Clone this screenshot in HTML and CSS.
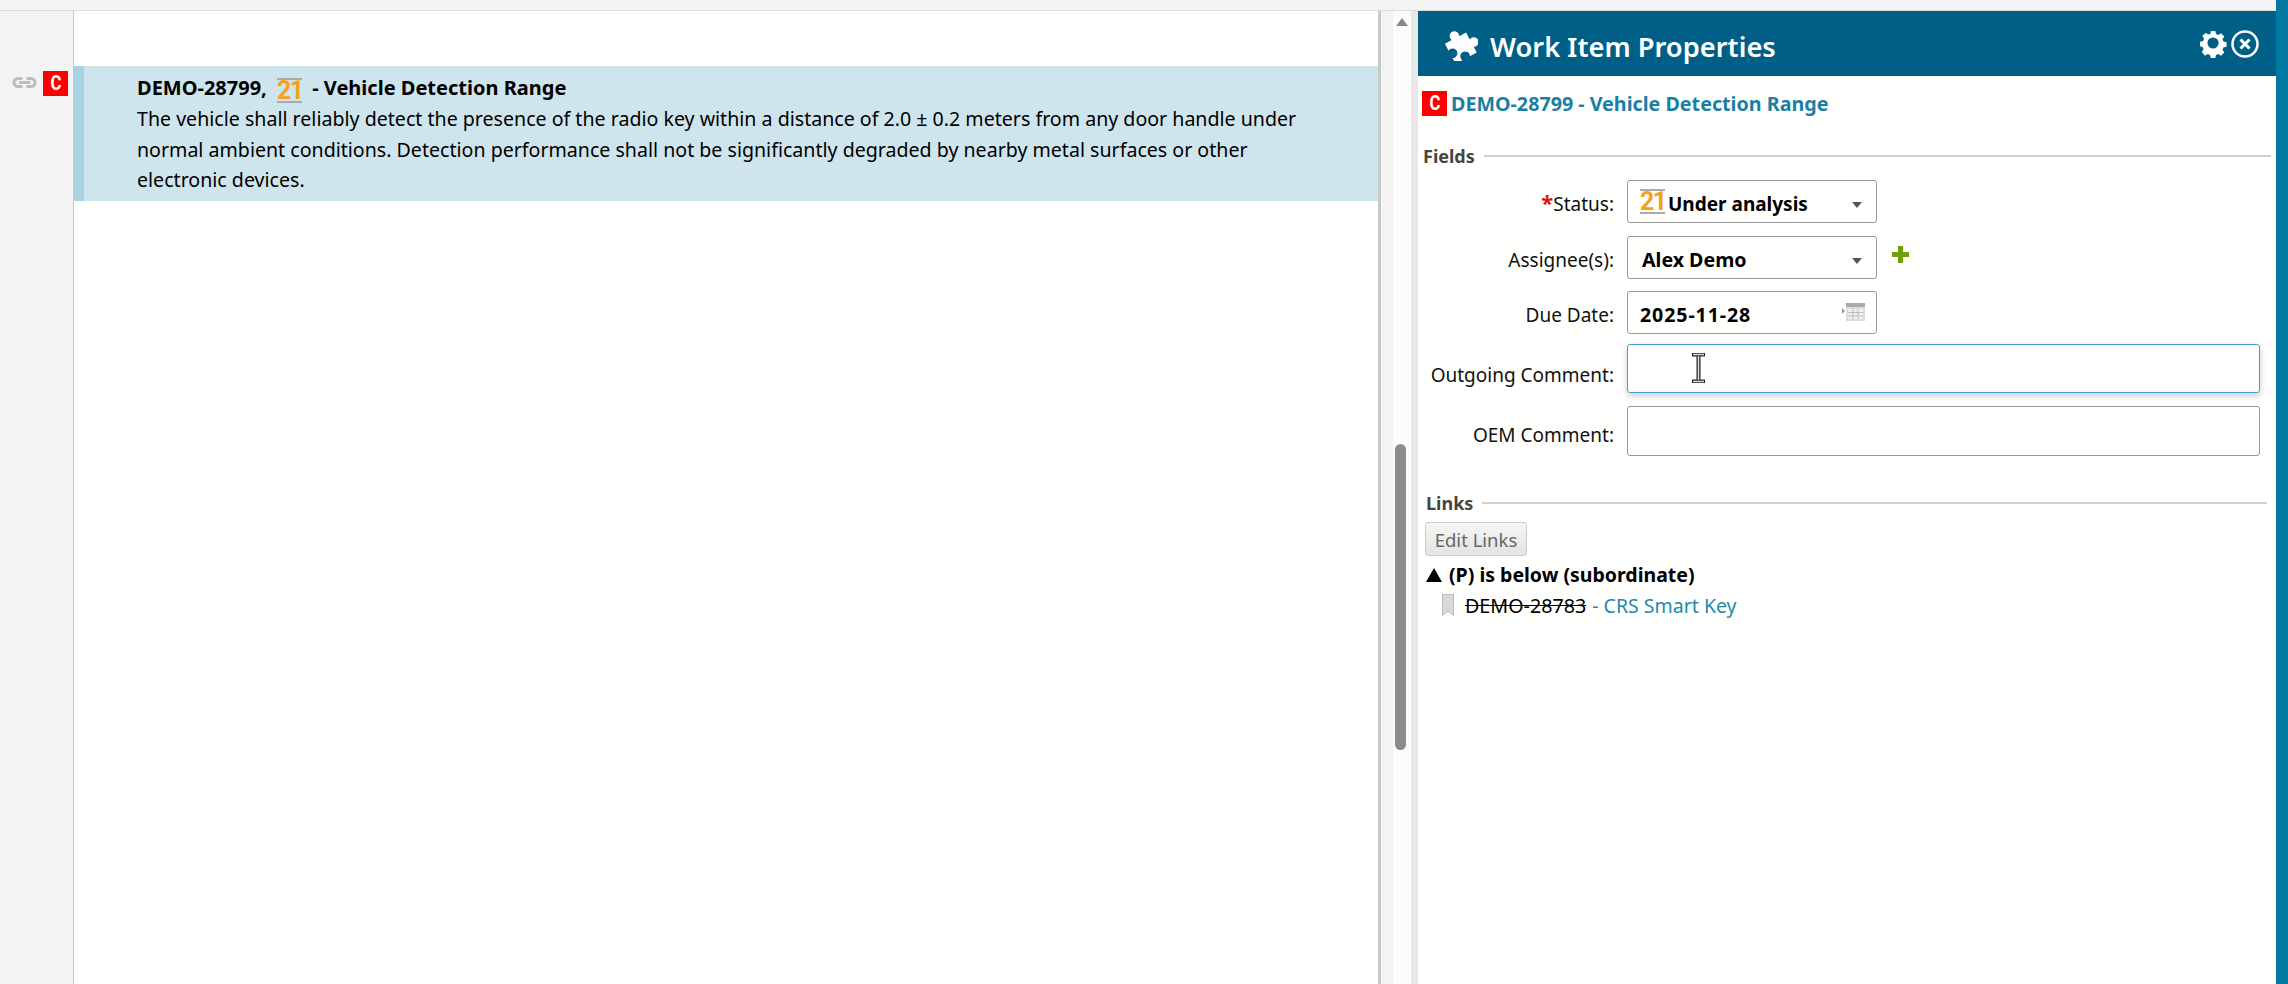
FILE: index.html
```html
<!DOCTYPE html>
<html lang="en">
<head>
<meta charset="utf-8">
<title>Work Item Properties</title>
<link rel="stylesheet" href="styles.css">
</head>
<body>
<div class="topstrip"></div>
<div class="main">
  <div class="gutter">
    <svg class="chain" width="25" height="11" viewBox="0 0 25 11"><g fill="none" stroke="#bdbdbd" stroke-width="3"><path d="M10.500 1.500H6a4 4 0 0 0 0 8h4.500"/><path d="M14.500 1.500H19a4 4 0 0 1 0 8h-4.500"/><path d="M7 5.500h11"/></g></svg>
    <span class="badge"><span class="badge-c">C</span></span>
  </div>
  <div class="doc">
    <div class="row">
      <div class="row-title">DEMO-28799, <span class="st21 st21-small">21</span> - Vehicle Detection Range</div>
      <p class="row-text">The vehicle shall reliably detect the presence of the radio key within a distance of 2.0 ± 0.2 meters from any door handle under normal ambient conditions. Detection performance shall not be significantly degraded by nearby metal surfaces or other electronic devices.</p>
    </div>
  </div>
  <div class="sash"></div>
  <div class="scroll">
    <svg class="scroll-up" width="14" height="10" viewBox="0 0 14 10"><path d="M7 1l6 8H1z" fill="#8a8a8a"/></svg>
    <div class="thumb"></div>
  </div>
  <div class="panel">
    <header class="phead">
      <svg class="puzzle" width="36" height="30" viewBox="3 2 30 25"><g transform="rotate(-28 18 15)"><path fill="#fff" d="M8 7h6.500a4 4 0 1 1 7 0H28v6.500a4 4 0 1 1 0 7V26h-6.500a4 4 0 1 0-7 0H8v-5.500a4 4 0 1 0 0-7z"/></g></svg>
      <h1 class="ptitle">Work Item Properties</h1>
      <div class="pactions">
        <svg width="28" height="28" viewBox="0 0 28 28"><path fill="#fff" fill-rule="evenodd" d="M11.500 1h5l.7 3.400 2.500 1 2.900-1.900 3.500 3.500-1.900 2.900 1 2.500 3.400.7v5l-3.400.7-1 2.500 1.900 2.900-3.500 3.500-2.900-1.900-2.500 1-.7 3.400h-5l-.7-3.400-2.500-1-2.900 1.900L1.900 23.700l1.900-2.900-1-2.500L0 17.500v-5l3.400-.7 1-2.500L2.500 6.500 6 3l2.900 1.900 2.500-1zM14 8a6 6 0 1 0 0 12 6 6 0 0 0 0-12z" transform="translate(1 0) scale(.93)"/></svg>
        <svg width="28" height="28" viewBox="0 0 28 28"><circle cx="14" cy="14" r="12.500" fill="none" stroke="#fff" stroke-width="2.500"/><path d="M9.500 9.500l9 9M18.500 9.500l-9 9" stroke="#fff" stroke-width="3" fill="none"/></svg>
      </div>
    </header>
    <div class="pbody">
      <div class="item-link"><span class="badge"><span class="badge-c">C</span></span><a class="item-name">DEMO-28799 - Vehicle Detection Range</a></div>
      <div class="legend legend-fields"><span>Fields</span></div>
      <div class="form">
        <label class="lbl lbl-s"><span class="req">*</span>Status:</label>
        <div class="field field-sm select"><span class="st21">21</span><b>Under analysis</b><i class="caret"></i></div>
        <label class="lbl lbl-a">Assignee(s):</label>
        <div class="assignee">
          <div class="field field-sm select"><b class="pad">Alex Demo</b><i class="caret"></i></div>
          <svg class="plus" width="17" height="17" viewBox="0 0 17 17"><path fill="#6f9f10" d="M6 0h5v6h6v5h-6v6H6v-6H0V6h6z"/></svg>
        </div>
        <label class="lbl">Due Date:</label>
        <div class="field field-sm select"><b class="date">2025-11-28</b>
          <svg class="cal" width="24" height="20" viewBox="0 0 24 20"><path d="M0 6l3 3-3 3z" fill="#999"/><path d="M4 1h19v18H4z" fill="#dcdcdc"/><path d="M4 1h19v4H4z" fill="#aaa"/><path d="M6 7h15v10H6z" fill="#f1f1f1"/><path d="M6 10.500h15M6 14h15M11 7v10M16 7v10" stroke="#bbb" fill="none"/></svg>
        </div>
        <label class="lbl lbl-o">Outgoing Comment:</label>
        <div class="field field-lg focus"></div>
        <label class="lbl lbl-e">OEM Comment:</label>
        <div class="field field-lg field-oem"></div>
      </div>
      <div class="legend legend-links"><span>Links</span></div>
      <button class="btn" type="button">Edit Links</button>
      <div class="rel"><span class="tri"></span>(P) is below (subordinate)</div>
      <div class="rel-item">
        <svg class="mark" width="12" height="22" viewBox="0 0 12 22"><path d="M.5.500h11v21L6 17 .5 21.500z" fill="#d9d9d9" stroke="#bbb"/></svg>
        <s>DEMO-28783</s><a class="rel-link"> - CRS Smart Key</a>
      </div>
    </div>
    <svg class="ibeam" width="15" height="30" viewBox="0 0 15 30"><path d="M1 1.500h13M1 28.500h13M7.500 2v26" fill="none" stroke="#222" stroke-width="4"/><path d="M2 1.500h11M2 28.500h11M7.500 3v24" fill="none" stroke="#ddd" stroke-width="1.500"/></svg>
  </div>
  <div class="edge"></div>
</div>
</body>
</html>
```
FILE: styles.css
```css
* { box-sizing: border-box; }
html, body { height: 100%; margin: 0; }
body {
  display: flex;
  flex-direction: column;
  background: #fffffd;
  font-family: "Noto Sans", "Open Sans", sans-serif;
  font-size: 19px;
  color: #000;
  overflow: hidden;
}
.topstrip { height: 11px; flex: none; background: #f4f4f4; border-bottom: 1px solid #dcdcdc; }
.main { flex: 1; display: flex; min-height: 0; }
.gutter {
  width: 74px; flex: none;
  background: #f3f3f3;
  border-right: 1px solid #c9c9c9;
  display: flex;
  align-items: flex-start;
  justify-content: flex-end;
  gap: 6px;
  padding: 60px 5px 0 0;
}
.chain { margin-top: 6px; }
.badge {
  display: inline-flex;
  align-items: center;
  justify-content: center;
  width: 25px; height: 25px;
  flex: none;
  background: #f00;
  color: #fff;
  font-family: "Roboto", sans-serif;
  font-weight: 700;
  font-size: 21px;
  line-height: 1;
}
.badge-c { display: inline-block; transform: scaleX(.8); }
.doc { width: 1304px; flex: none; background: #fffffd; padding-top: 55px; }
.row {
  height: 135px;
  background: #cfe5ed;
  border-left: 10px solid #a9d3e2;
  padding: 6px 58px 0 53px;
  font-size: 19.600px;
}
.row-title { font-weight: 700; font-size: 20px; line-height: 31px; height: 32px; }
.row-text { margin: 0; line-height: 30.500px; }
.st21 {
  display: inline-block;
  font-family: "Roboto", sans-serif;
  font-weight: 700;
  color: #f7a11a;
  border-top: 2px solid #aaa;
  border-bottom: 2px solid #aaa;
  font-size: 25px;
  line-height: 22px;
  height: 25px;
  width: 25px;
  letter-spacing: -1.500px;
  text-align: center;
  flex: none;
}
.st21-small { vertical-align: -4px; margin: 0 5px 0 5px; }
.sash { width: 3px; flex: none; background: #c8c8c8; }
.scroll {
  width: 37px; flex: none;
  background: linear-gradient(to right, #f3f3f3 12px, #fcfcfc 12px, #fcfcfc 30px, #e8e8e8 30px);
  padding: 6px 0 0 14px;
  display: flex;
  flex-direction: column;
}
.scroll-up { flex: none; }
.thumb { width: 11px; height: 306px; margin-top: 417px; background: #8c8c8c; border-radius: 6px; }
.panel { flex: 1; position: relative; min-width: 0; }
.edge { width: 12px; flex: none; background: #0078a0; margin-top: -11px; }
.phead {
  height: 65px;
  background: #005f87;
  display: flex;
  align-items: center;
  padding: 4px 17px 0 24px;
  color: #fff;
}
.puzzle { margin-right: 12px; }
.ptitle { margin: 0; font-size: 27.300px; font-weight: 600; flex: 1; padding-top: 2px; }
.pactions { display: flex; gap: 4px; margin-top: -4px; }
.pbody { padding: 14px 0 0 0; }
.item-link { display: flex; align-items: center; padding-left: 4px; height: 26px; gap: 4px; }
.item-name { font-weight: 700; color: #1a7fa5; font-size: 19.700px; }
.legend {
  display: flex;
  align-items: center;
  gap: 9px;
  font-weight: 700;
  color: #444;
  font-size: 18px;
}
.legend::after { content: ""; flex: 1; height: 2px; background: #d0d0d0; }
.legend-fields { margin: 27px 5px 0 5px; height: 26px; }
.form {
  display: grid;
  grid-template-columns: 196px 633px;
  column-gap: 13px;
  row-gap: 12px;
  margin-top: 11px;
  align-items: center;
}
.lbl { text-align: right; font-size: 19px; color: #111; padding-top: 4px; }
.lbl-a, .assignee { margin-top: 1px; }
.lbl-o, .focus { margin-top: -2px; }
.lbl-o { padding-top: 12px; }
.lbl-e { padding-top: 9px; }
.req { color: #e01010; font-weight: 700; font-size: 22px; line-height: 0; }
.field {
  border: 1px solid #999;
  border-radius: 3px;
  background: #fffffd;
  display: flex;
  align-items: center;
}
.field-sm { width: 250px; height: 43px; padding: 4px 12px 0; font-size: 19px; }
.field-lg { height: 49px; }
.field-oem { height: 50px; margin-top: 1px; }
.focus { border: 1px solid #45a0cc; box-shadow: 0 3px 6px rgba(0,0,0,.2); }
.select { position: relative; }
.select b { font-weight: 700; }
.select .st21 { margin-right: 3px; margin-top: -4px; }
.pad { padding-left: 2px; font-size: 19.600px; }
.select .date { font-size: 19.600px; letter-spacing: .9px; }
.caret {
  position: absolute;
  right: 14px; top: 21px;
  border-left: 5px solid transparent;
  border-right: 5px solid transparent;
  border-top: 6px solid #555;
}
.cal { position: absolute; right: 10px; top: 10px; }
.assignee { display: flex; align-items: center; gap: 15px; }
.plus { margin-top: -6px; }
.legend-links { margin: 34px 9px 0 8px; height: 26px; }
.btn {
  display: block;
  margin: 6px 0 0 7px;
  width: 102px; height: 34px;
  border: 1px solid #ccc;
  border-radius: 3px;
  background: linear-gradient(#f6f6f6, #e3e3e3);
  color: #666;
  font-family: inherit;
  font-size: 18.500px;
  padding: 0;
}
.rel { margin: 4px 0 0 8px; font-weight: 700; font-size: 19.500px; height: 30px; line-height: 30px; }
.tri {
  display: inline-block;
  border-left: 8px solid transparent;
  border-right: 8px solid transparent;
  border-bottom: 14px solid #000;
  margin-right: 7px;
}
.rel-item { display: flex; align-items: center; margin-left: 24px; height: 30px; font-size: 19.700px; white-space: pre; }
.mark { margin-right: 11px; }
.rel-link { color: #2389ad; font-size: 19.500px; margin-left: 1px; }
.ibeam { position: absolute; left: 273px; top: 342px; }
```
